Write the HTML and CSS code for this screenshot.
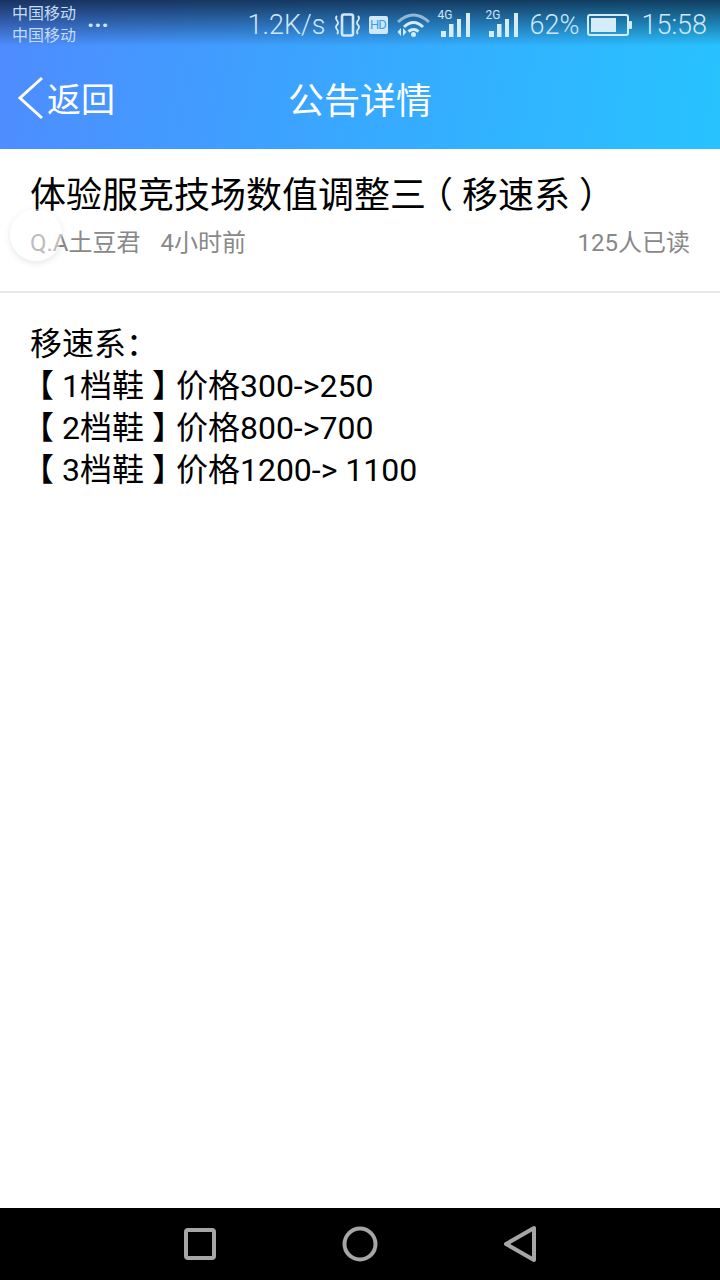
FILE: index.html
```html
<!DOCTYPE html>
<html>
<head>
<title>公告详情</title>
<link rel="stylesheet" href="styles.css">
</head>
<body>
<div class="pantalla">
  <header class="cabecera">
    <div class="estado">
      <div class="estado__operador">
        <span>中国移动</span>
        <span>中国移动</span>
      </div>
      <span class="estado__puntos">···</span>
      <div class="estado__derecha">
        <span class="estado__red">1.2K/s</span>
        <svg width="27" height="24" viewBox="0 0 27 24"><rect x="8" y="1.500" width="11" height="21" rx="2" fill="none" stroke="#cfe8fb" stroke-width="2.600"/><path d="M3 3q-2 2 0 4.500t0 4.500q-2 2 0 4.500t0 4.500M24 3q2 2 0 4.500t0 4.500q2 2 0 4.500t0 4.500" fill="none" stroke="#cfe8fb" stroke-width="1.800"/></svg>
        <span class="estado__hd">HD</span>
        <svg width="35" height="24" viewBox="0 0 35 24"><path d="M2 9q15.500-14 31 0" fill="none" stroke="#8fb9d8" stroke-width="3"/><path d="M8 14q9.500-9 19 0M12.500 18.500q5-4 10 0" fill="none" stroke="#d5ecfb" stroke-width="3"/><circle cx="17.500" cy="21.500" r="2.500" fill="#d5ecfb"/><path d="M5 15v8l-3.500-4zM7 15v8l3.500-4z" fill="#d5ecfb"/></svg>
        <div class="senal">
          <b>4G</b>
          <svg width="30" height="24" viewBox="0 0 30 24"><path d="M0 18h5v6H0zM8 11h4.500v13H8zM16 6h4v18h-4zM25 0h4v24h-4z" fill="#d5ecfb"/></svg>
        </div>
        <div class="senal senal--segunda">
          <b>2G</b>
          <svg width="30" height="24" viewBox="0 0 30 24"><path d="M0 18h5v6H0zM8 11h4.500v13H8zM16 6h4v18h-4zM25 0h4v24h-4z" fill="#d5ecfb"/></svg>
        </div>
        <span class="estado__bateria">62%</span>
        <svg width="45" height="22" viewBox="0 0 45 22"><rect x="1" y="1" width="40" height="20" rx="2" fill="none" stroke="#d5ecfb" stroke-width="2"/><rect x="4" y="4" width="25" height="14" fill="#d5ecfb"/><rect x="42" y="7" width="3" height="8" rx="1" fill="#d5ecfb"/></svg>
        <span class="estado__hora">15:58</span>
      </div>
    </div>
    <div class="barra">
      <a class="barra__volver">
        <svg width="26" height="44" viewBox="0 0 26 44"><path d="M25 2L3 22l22 20" fill="none" stroke="#fff" stroke-width="3"/></svg>
        <span>返回</span>
      </a>
      <h1 class="barra__titulo">公告详情</h1>
    </div>
  </header>

  <section class="aviso">
    <h2 class="aviso__titulo">体验服竞技场数值调整三<span class="abre abre--titulo">（</span> 移速系 ）</h2>
    <div class="aviso__meta">
      <span>Q.A土豆君</span>
      <span class="aviso__tiempo">4小时前</span>
      <span class="aviso__leidos">125人已读</span>
    </div>
  </section>

  <main class="contenido">
    <p>移速系：</p>
    <p><span class="abre">【</span> 1档鞋 <span class="cierra">】</span>价格300-&gt;250</p>
    <p><span class="abre">【</span> 2档鞋 <span class="cierra">】</span>价格800-&gt;700</p>
    <p><span class="abre">【</span> 3档鞋 <span class="cierra">】</span>价格1200-&gt; 1100</p>
  </main>

  <nav class="navegacion">
    <svg width="32" height="32" viewBox="0 0 32 32"><rect x="2" y="2" width="28" height="28" rx="2" fill="none" stroke="#a6a6a6" stroke-width="4"/></svg>
    <svg width="36" height="36" viewBox="0 0 36 36"><circle cx="18" cy="18" r="15.500" fill="none" stroke="#a6a6a6" stroke-width="4"/></svg>
    <svg width="34" height="38" viewBox="0 0 34 38"><path d="M31 3v32L3 19z" fill="none" stroke="#a6a6a6" stroke-width="4" stroke-linejoin="round"/></svg>
  </nav>

  <div class="flotante"></div>
</div>
</body>
</html>
```

FILE: styles.css
```css
html, body {
	margin: 0;
	padding: 0;
}

body {
	font-family: Roboto, "Noto Sans CJK SC", sans-serif;
	background-color: #fff;
}

.pantalla {
	position: relative;
	display: flex;
	flex-direction: column;
	width: 720px;
	height: 1280px;
	overflow: hidden;
}

.cabecera {
	height: 149px;
	background-image: linear-gradient(to bottom, rgba(10, 25, 50, 0.78), rgba(10, 25, 50, 0) 46px), linear-gradient(100deg, #4f8bff, #38a8ff 50%, #27c3ff);
}

.estado {
	display: flex;
	align-items: center;
	height: 50px;
	padding: 0 13px 0 12px;
	color: #cfe8fb;
}

.estado__operador {
	display: flex;
	flex-direction: column;
	font-size: 16px;
	line-height: 22px;
	color: #c4dcf5;
}

.estado__puntos {
	margin-left: 11px;
	font-size: 24px;
	font-weight: bold;
}

.estado__derecha {
	display: flex;
	align-items: center;
	gap: 8px;
	margin-left: auto;
	font-size: 27px;
	font-weight: 300;
}

.estado__hd {
	display: block;
	width: 19px;
	border-radius: 2px;
	font-size: 13px;
	font-weight: 400;
	line-height: 18px;
	text-align: center;
	letter-spacing: -1px;
	color: #3b9cf0;
	background-color: #cfe8fb;
}

.senal {
	position: relative;
	margin-left: 2px;
}

.senal--segunda {
	margin-left: 10px;
}

.senal b {
	position: absolute;
	top: -5px;
	left: -3px;
	font-size: 12px;
	line-height: 14px;
}

.senal svg {
	display: block;
}

.estado__bateria {
	margin-left: 3px;
}

.estado__hora {
	margin-left: 1px;
}

.barra {
	display: grid;
	grid-template-columns: 1fr auto 1fr;
	align-items: center;
	height: 95px;
	padding-bottom: 4px;
	color: #fff;
}

.barra__volver {
	display: flex;
	align-items: center;
	gap: 4px;
	padding-left: 17px;
	font-size: 34px;
}

.barra__volver svg {
	display: block;
}

.barra__titulo {
	margin: 0;
	font-size: 36px;
	font-weight: normal;
}

.aviso {
	height: 144px;
	box-sizing: border-box;
	padding: 24px 30px 0;
	border-bottom: 2px solid #e8e8e8;
}

.aviso__titulo {
	margin: 0;
	font-size: 36px;
	line-height: 46px;
	font-weight: normal;
	color: #000;
}

/* corchetes a media anchura, como en la captura */
.abre,
.cierra {
	font-feature-settings: "halt";
}

.abre {
	margin-left: 8px;
}

.abre--titulo {
	margin-left: 9px;
}

.cierra {
	margin-right: 8px;
}

.aviso__meta {
	display: flex;
	margin-top: 8px;
	font-size: 24px;
	line-height: 32px;
	color: #888;
}

.aviso__tiempo {
	margin-left: 20px;
}

.aviso__leidos {
	margin-left: auto;
}

.contenido {
	flex: 1;
	padding: 30px 30px 0;
	font-size: 32px;
	line-height: 42px;
	color: #000;
}

.contenido p {
	margin: 0;
}

.navegacion {
	display: grid;
	grid-template-columns: repeat(3, 160px);
	justify-content: center;
	justify-items: center;
	align-items: center;
	height: 72px;
	background-color: #000;
}

.flotante {
	position: absolute;
	left: 10px;
	top: 209px;
	width: 52px;
	height: 52px;
	border-radius: 50%;
	background-color: rgba(255, 255, 255, 0.45);
	box-shadow: 0 2px 7px rgba(0, 0, 0, 0.1);
}
```
